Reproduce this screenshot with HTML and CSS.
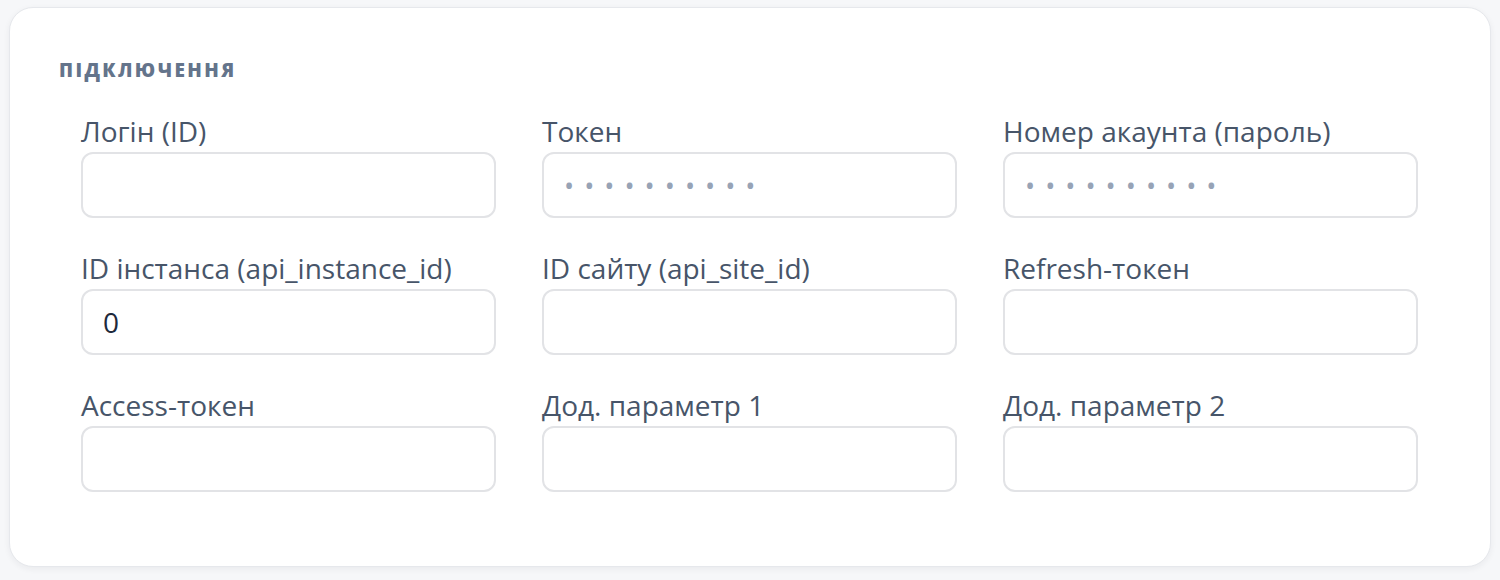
FILE: index.html
```html
<!DOCTYPE html>
<html lang="uk">
<head>
  <meta charset="UTF-8" />
  <title>Підключення</title>
  <link rel="stylesheet" href="styles.css">
</head>
<body>

<div class="card">
  <h3 class="section-title">Підключення</h3>
  <div class="fields">
    <div class="field">
      <label>Логін (ID)</label>
      <input type="text" />
    </div>
    <div class="field">
      <label>Токен</label>
      <input type="text" class="secret" placeholder="••••••••••" />
    </div>
    <div class="field">
      <label>Номер акаунта (пароль)</label>
      <input type="text" class="secret" placeholder="••••••••••" />
    </div>

    <div class="field">
      <label>ID інстанса (api_instance_id)</label>
      <input type="text" value="0" />
    </div>
    <div class="field">
      <label>ID сайту (api_site_id)</label>
      <input type="text" />
    </div>
    <div class="field">
      <label>Refresh-токен</label>
      <input type="text" />
    </div>

    <div class="field">
      <label>Access-токен</label>
      <input type="text" />
    </div>
    <div class="field">
      <label>Дод. параметр 1</label>
      <input type="text" />
    </div>
    <div class="field">
      <label>Дод. параметр 2</label>
      <input type="text" />
    </div>
  </div>
</div>

</body>
</html>
```

FILE: styles.css
```css
* {
  box-sizing: border-box;
  margin: 0;
  padding: 0;
}

body {
  font-family: "Open Sans", sans-serif;
  background: #f6f7f9;
  padding: 7px 9px;
}

.card {
  width: 1482px;
  height: 560px;
  background: #fff;
  border: 1px solid #e6e8ec;
  border-radius: 24px;
  box-shadow: 0 2px 6px rgba(30, 41, 59, 0.06);
  padding: 50px 49px 0;
}

.section-title {
  font-size: 19px;
  font-weight: 800;
  letter-spacing: 2.4px;
  line-height: 24px;
  text-transform: uppercase;
  color: #64748b;
  margin-bottom: 33px;
}

.fields {
  display: grid;
  grid-template-columns: repeat(3, 415px);
  column-gap: 46px;
  row-gap: 34px;
  padding-left: 22px;
}

.field label {
  display: block;
  font-size: 28px;
  line-height: 32px;
  color: #475569;
  margin-bottom: 5px;
}

.field input {
  display: block;
  width: 100%;
  height: 66px;
  border: 2px solid #e2e3e6;
  border-radius: 12px;
  padding: 0 20px;
  font-family: inherit;
  font-size: 28px;
  color: #1e293b;
  background: #fff;
  outline: none;
}

.field input.secret::placeholder {
  font-size: 27px;
  color: #97a3b6;
  letter-spacing: 10px;
}
```
